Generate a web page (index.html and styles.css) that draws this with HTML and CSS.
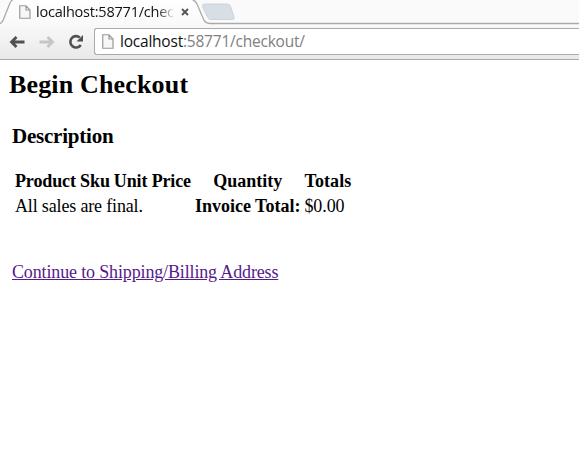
FILE: index.html
```
<!DOCTYPE html>
<html lang="en">
<head>
<meta charset="utf-8">
<title>Begin Checkout</title>
<link rel="stylesheet" href="styles.css">
</head>
<body>
<header class="browser">
  <div class="tabs">
    <svg class="tab-shape" width="579" height="26" viewBox="0 0 579 26" fill="none">
      <defs><linearGradient id="tabfill" x1="0" y1="0" x2="0" y2="1"><stop stop-color="#fff"/><stop offset="1" stop-color="#f9f9f9"/></linearGradient></defs>
      <path d="M0 23.5C2 23 3 21 4 18L10 3Q11.500 0 14 -1H191Q195 0 197 4L203 18Q205 23.500 210 23.500H579V26H0Z" fill="url(#tabfill)"/>
      <path d="M0 23.500C2 23 3 21 4 18L10 3Q11.500 0 14 -1M191 -1Q195 0 197 4L203 18Q205 23.500 210 23.500H579" stroke="#aaa" stroke-width="1.300"/>
      <path d="M205 4H227Q229.500 4 230.500 6L234 17Q235 19.500 232 19.500H211Q208.500 19.500 207.500 17L202.500 6.500Q202 4 205 4Z" fill="#d7dee5" stroke="#cdd3da"/>
    </svg>
    <svg class="page-icon" width="12" height="14" viewBox="0 0 12 14"><path d="M.75.75H7L11 5V13.250H.750ZM7 .750V5H11" fill="#f7f7f7" stroke="#999" stroke-width="1.200"/></svg>
    <span class="tab-title">localhost:58771/chec</span>
    <svg class="close" width="8" height="8" viewBox="0 0 8 8"><path d="M1 1L7 7M7 1L1 7" stroke="#555" stroke-width="1.900"/></svg>
  </div>
  <div class="toolbar">
    <svg class="back" width="16" height="14" viewBox="0 0 16 14"><path d="M15.500 7H3M7.500 2L2.500 7L7.500 12" fill="none" stroke="#505050" stroke-width="2.800"/></svg>
    <svg class="forward" width="16" height="14" viewBox="0 0 16 14"><path d="M.5 7H13M8.500 2L13.500 7L8.500 12" fill="none" stroke="#c6c6c6" stroke-width="2.800"/></svg>
    <svg class="reload" width="16" height="16" viewBox="0 0 16 16"><path d="M12.800 11A5.700 5.700 0 1 1 11.800 3.500" fill="none" stroke="#505050" stroke-width="2.600"/><path d="M15 1V7.500H8.500Z" fill="#505050"/></svg>
    <div class="address">
      <svg class="page-icon" width="12" height="15" viewBox="0 0 12 15"><path d="M.75.75H7L11 5V14.250H.750ZM7 .750V5H11" fill="#f7f7f7" stroke="#999" stroke-width="1.200"/></svg>
      <span class="url">localhost<span class="url-rest">:58771/checkout/</span></span>
    </div>
  </div>
</header>
<main class="page">
  <h2>Begin Checkout</h2>
  <h3>Description</h3>
  <table>
    <tr><th>Product Sku</th><th>Unit Price</th><th class="quantity">Quantity</th><th class="total">Totals</th></tr>
    <tr><td colspan="2">All sales are final.</td><th class="invoice">Invoice Total:</th><td class="amount">$0.00</td></tr>
  </table>
  <a class="continue" href="#">Continue to Shipping/Billing Address</a>
</main>
</body>
</html>
```
FILE: styles.css
```
* { box-sizing: border-box; }
body {
  margin: 0;
  background: #fff;
  color: #000;
  font-family: "Liberation Serif", serif;
  font-size: 18px;
  overflow: hidden;
}
svg { display: block; flex: none; }
.browser {
  height: 60px;
  background: #fafafa;
  font-family: "Open Sans", sans-serif;
  font-weight: 400;
}
.tabs {
  position: relative;
  display: flex;
  align-items: flex-start;
  height: 24px;
  padding-left: 19px;
}
.tab-shape { position: absolute; left: 0; top: 0; }
.tabs .page-icon { position: relative; margin-top: 5px; }
.tab-title {
  position: relative;
  width: 138px;
  margin-left: 5px;
  overflow: hidden;
  white-space: nowrap;
  font-size: 14.5px;
  letter-spacing: -0.22px;
  line-height: 24px;
  color: #111;
  -webkit-mask-image: linear-gradient(to right, #000 121px, transparent 139px);
  mask-image: linear-gradient(to right, #000 121px, transparent 139px);
}
.close { position: relative; margin: 8px 0 0 7px; }
.toolbar {
  display: flex;
  align-items: flex-start;
  height: 36px;
  padding-left: 9px;
  background: linear-gradient(#f9f9f9, #e9e9e9);
  border-bottom: 1px solid #aaa;
}
.back { margin-top: 11px; }
.forward { margin: 11px 0 0 14px; }
.reload { margin: 10px 0 0 13px; }
.address {
  display: flex;
  flex: none;
  align-items: flex-start;
  width: 486px;
  height: 27px;
  margin: 4px 0 0 10px;
  padding-left: 7px;
  background: #fff;
  border: 1px solid #aaa;
  border-right: 0;
  border-radius: 3px 0 0 3px;
}
.address .page-icon { margin-top: 5px; }
.url {
  margin-left: 6px;
  font-size: 15.5px;
  letter-spacing: -0.22px;
  line-height: 25px;
  white-space: nowrap;
  color: #111;
}
.url-rest { color: #808080; }
.page { padding: 9px 9px 0; }
h2 { margin: 0; font-size: 26px; line-height: 32px; letter-spacing: 0.16px; }
h3 { margin: 21px 0 0 3px; font-size: 21px; line-height: 28px; letter-spacing: -0.22px; }
table {
  margin: 18px 0 0 3px;
  border-spacing: 2px;
  border-collapse: separate;
  line-height: 21px;
  letter-spacing: -0.13px;
}
th, td { padding: 1px; white-space: nowrap; text-align: left; }
td { letter-spacing: -0.16px; }
.quantity { text-align: center; }
.invoice, .quantity { letter-spacing: 0; }
.total { letter-spacing: 0.1px; }
.amount { letter-spacing: -0.1px; }
.continue {
  display: inline-block;
  margin: 40px 0 0 3px;
  line-height: 24px;
  letter-spacing: -0.145px;
  color: #551a8b;
}
```
